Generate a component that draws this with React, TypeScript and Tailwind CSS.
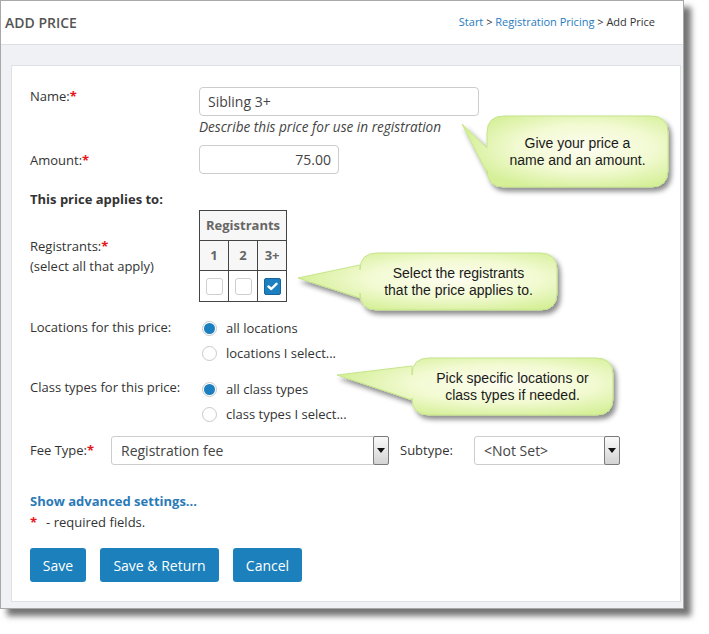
import React from "react";

const sans = "font-['Open_Sans','Noto_Sans',sans-serif]";

type Bubble = {
  id: string;
  x0: number;
  y0: number;
  x1: number;
  y1: number;
  tip: [number, number];
  ya: number;
  yb: number;
  lines: string[];
};

const bubbles: Bubble[] = [
  { id: "b1", x0: 487, y0: 116, x1: 668, y1: 187, tip: [462, 124], ya: 148, yb: 173, lines: ["Give your price a", "name and an amount."] },
  { id: "b2", x0: 360, y0: 253, x1: 557, y1: 310, tip: [298, 278], ya: 265, yb: 298, lines: ["Select the registrants", "that the price applies to."] },
  { id: "b3", x0: 412, y0: 358, x1: 613, y1: 415, tip: [337, 375], ya: 366, yb: 400, lines: ["Pick specific locations or", "class types if needed."] },
];

function bubblePath(b: Bubble) {
  const r = 17;
  const { x0, y0, x1, y1, ya, yb } = b;
  const [tx, ty] = b.tip;
  return `M ${x0 + r} ${y0} H ${x1 - r} Q ${x1} ${y0} ${x1} ${y0 + r} V ${y1 - r} Q ${x1} ${y1} ${x1 - r} ${y1} H ${x0 + r} Q ${x0} ${y1} ${x0} ${y1 - r} V ${yb} L ${tx} ${ty} L ${x0} ${ya} V ${y0 + r} Q ${x0} ${y0} ${x0 + r} ${y0} Z`;
}

function Req() {
  return <span className="text-[#e8141b] font-bold">*</span>;
}

function Radio({ checked, label }: { checked?: boolean; label: string }) {
  return (
    <div className="flex items-center h-[25px]">
      <span className="ml-[3px] w-[15px] h-[15px] rounded-full border border-[#c9c9c9] bg-white flex items-center justify-center">
        {checked && <span className="w-[11px] h-[11px] rounded-full bg-[#1b7fc0]" />}
      </span>
      <span className="ml-[9px] text-[13px] text-[#333]">{label}</span>
    </div>
  );
}

function Check({ checked }: { checked?: boolean }) {
  if (checked)
    return (
      <span className="w-[17px] h-[17px] rounded-[2px] bg-[#1b7fc0] border border-[#17679c] flex items-center justify-center">
        <svg width="11" height="9" viewBox="0 0 11 9">
          <path d="M1.5 4.5 L4.3 7 L9.5 1.8" stroke="#fff" strokeWidth="2.4" fill="none" strokeLinecap="round" strokeLinejoin="round" />
        </svg>
      </span>
    );
  return <span className="w-[17px] h-[17px] rounded-[3px] bg-white border border-[#cfcfcf]" />;
}

function Select({ value, width }: { value: string; width: string }) {
  return (
    <div className={`${width} h-[29px] flex border border-[#cdcdcd] rounded-[3px] bg-white`}>
      <div className="flex-1 flex items-center pl-[9px] text-[14px] text-[#444]">{value}</div>
      <div className="w-[16px] -my-px -mr-px border border-[#7a7a7a] rounded-[2px] bg-gradient-to-b from-[#fafafa] to-[#d3d3d3] flex items-center justify-center">
        <svg width="8" height="5" viewBox="0 0 8 5">
          <path d="M0 0 H8 L4 5 Z" fill="#111" />
        </svg>
      </div>
    </div>
  );
}

export default function App() {
  return (
    <div className={`relative w-[709px] h-[634px] bg-white ${sans}`}>
      <div className="w-[684px] h-[609px] border border-[#a8a8a8] bg-[#eff1f4] shadow-[7px_7px_6px_rgba(0,0,0,0.55)] flex flex-col">
        {/* header */}
        <div className="h-[44px] bg-white border-b border-[#dde0e4] flex items-center justify-between pl-[4px] pr-[28px]">
          <h1 className="text-[14px] font-semibold text-[#555]">ADD PRICE</h1>
          <div className="text-[11px] text-[#333]">
            <span className="text-[#1f7bc0]">Start</span> &gt;{" "}
            <span className="text-[#1f7bc0]">Registration Pricing</span> &gt; Add Price
          </div>
        </div>

        {/* body */}
        <div className="pt-[20px] pl-[10px] pr-[2px]">
          <div className="h-[537px] bg-white border border-[#dde0e5] pl-[18px] pt-[21px]">
            <div className="flex items-start">
              <div className="w-[169px] text-[13px] text-[#333] leading-[18px]">
                Name:<Req />
              </div>
              <div className="w-[280px] h-[29px] border border-[#cccccc] rounded-[4px] flex items-center pl-[8px] text-[14px] text-[#444]">
                Sibling 3+
              </div>
            </div>
            <div className="ml-[169px] mt-[2px] text-[13.6px] leading-[18px] italic text-[#444]">
              Describe this price for use in registration
            </div>

            <div className="flex items-center mt-[9px]">
              <div className="w-[169px] text-[13px] text-[#333] pt-[2px]">
                Amount:<Req />
              </div>
              <div className="w-[140px] h-[29px] border border-[#cccccc] rounded-[4px] flex items-center justify-end pr-[7px] text-[14px] text-[#444]">
                75.00
              </div>
            </div>

            <div className="mt-[16px] text-[13px] leading-[18px] font-bold text-[#333]">This price applies to:</div>

            <div className="flex items-start mt-[2px]">
              <div className="w-[169px] pt-[26px] text-[13px] leading-[20px] text-[#333]">
                Registrants:<Req />
                <br />
                (select all that apply)
              </div>
              <table className="border-collapse text-[13px] font-bold text-[#666]">
                <tbody>
                  <tr className="h-[30px] bg-[#f7f7f7]">
                    <td colSpan={3} className="border border-[#444] text-center px-[6px]">
                      Registrants
                    </td>
                  </tr>
                  <tr className="h-[30px] bg-[#f7f7f7]">
                    <td className="border border-[#444] w-[29px] text-center">1</td>
                    <td className="border border-[#444] w-[29px] text-center">2</td>
                    <td className="border border-[#444] w-[29px] text-center">3+</td>
                  </tr>
                  <tr className="h-[31px]">
                    <td className="border border-[#444]">
                      <div className="flex justify-center"><Check /></div>
                    </td>
                    <td className="border border-[#444]">
                      <div className="flex justify-center"><Check /></div>
                    </td>
                    <td className="border border-[#444]">
                      <div className="flex justify-center"><Check checked /></div>
                    </td>
                  </tr>
                </tbody>
              </table>
            </div>

            <div className="flex items-start mt-[14px]">
              <div className="w-[169px] text-[13px] leading-[20px] text-[#333] pt-[1px]">Locations for this price:</div>
              <div>
                <Radio checked label="all locations" />
                <Radio label="locations I select..." />
              </div>
            </div>

            <div className="flex items-start mt-[11px]">
              <div className="w-[169px] text-[13px] leading-[20px] text-[#333]">Class types for this price:</div>
              <div>
                <Radio checked label="all class types" />
                <Radio label="class types I select..." />
              </div>
            </div>

            <div className="flex items-center mt-[9px]">
              <div className="w-[81px] text-[13px] text-[#333]">
                Fee Type:<Req />
              </div>
              <Select value="Registration fee" width="w-[278px]" />
              <div className="w-[85px] pl-[11px] text-[13px] text-[#333]">Subtype:</div>
              <Select value="<Not Set>" width="w-[146px]" />
            </div>

            <div className="mt-[27px] text-[13px] leading-[18px] font-bold text-[#2a7ab8]">Show advanced settings...</div>
            <div className="mt-[3px] text-[13px] leading-[18px] text-[#333]">
              <span className="text-[#e8141b] font-bold">*</span>
              <span className="ml-[9px]">- required fields.</span>
            </div>

            <div className="flex gap-[14px] mt-[17px]">
              <button className="h-[34px] w-[56px] rounded-[3px] bg-[#1b80bb] text-white text-[14px]">Save</button>
              <button className="h-[34px] w-[119px] rounded-[3px] bg-[#1b80bb] text-white text-[14px]">Save &amp; Return</button>
              <button className="h-[34px] w-[69px] rounded-[3px] bg-[#1b80bb] text-white text-[14px]">Cancel</button>
            </div>
          </div>
        </div>
      </div>

      {/* callouts */}
      <svg className="absolute left-0 top-0 pointer-events-none" width="709" height="634" viewBox="0 0 709 634">
        <defs>
          {bubbles.map((b) => (
            <radialGradient key={b.id} id={`g-${b.id}`} cx="0.6" cy="0.45" r="0.6">
              <stop offset="0" stopColor="#fdfdf0" />
              <stop offset="0.55" stopColor="#f2fad2" />
              <stop offset="1" stopColor="#d6f09a" />
            </radialGradient>
          ))}
          <filter id="bshadow" x="-20%" y="-20%" width="140%" height="150%">
            <feDropShadow dx="3" dy="4" stdDeviation="2.6" floodColor="#000" floodOpacity="0.45" />
          </filter>
        </defs>
        {bubbles.map((b) => (
          <path key={b.id} d={bubblePath(b)} fill={`url(#g-${b.id})`} stroke="#c6e58a" strokeWidth="1" filter="url(#bshadow)" />
        ))}
      </svg>
      {bubbles.map((b) => (
        <div
          key={b.id}
          className="absolute flex flex-col items-center justify-center text-[14px] leading-[17px] text-[#1a1a1a] font-['Liberation_Sans',Arial,sans-serif]"
          style={{ left: b.x0, top: b.y0, width: b.x1 - b.x0, height: b.y1 - b.y0 }}
        >
          {b.lines.map((l) => (
            <div key={l}>{l}</div>
          ))}
        </div>
      ))}
    </div>
  );
}
